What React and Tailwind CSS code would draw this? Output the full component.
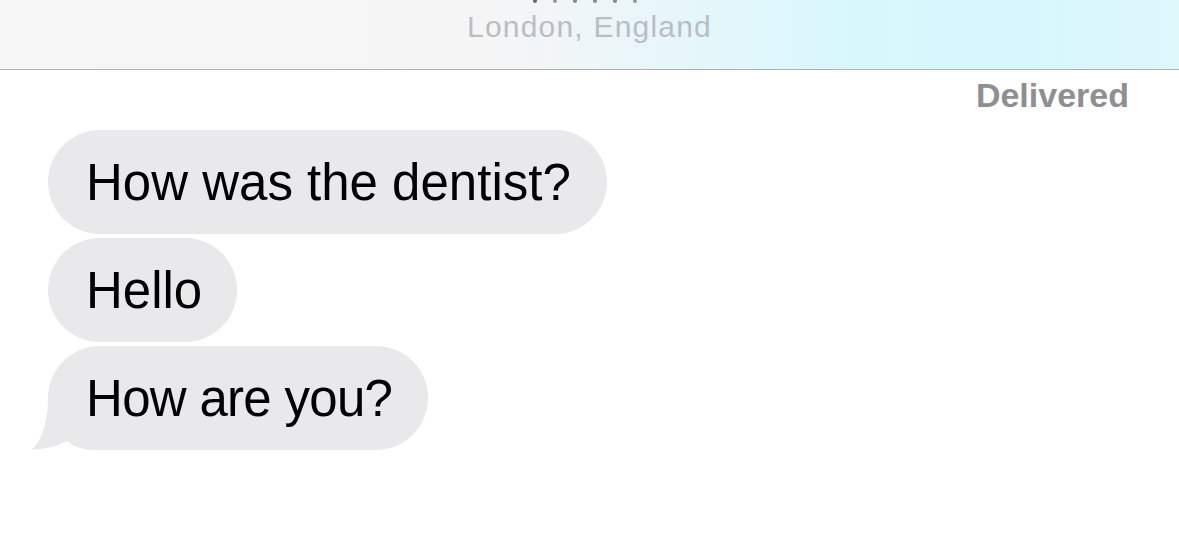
export default function App() {
  const font = { fontFamily: '"Liberation Sans", Arial, sans-serif' };
  return (
    <div className="w-[1179px] h-[535px] bg-white overflow-hidden" style={font}>
      <div className="h-[70px] border-b border-[#b3b3b3] flex flex-col items-center bg-[linear-gradient(90deg,#f6f6f6_0%,#f5f5f6_42%,#e6f6fa_58%,#d8f7fd_72%,#d6f7fe_86%,#ddf7fb_100%)]">
        <div className="flex gap-[16px] h-[3px] overflow-hidden ml-[-10px]">
          <span className="w-[4px] h-[3px] bg-[#6b6b6b] rounded-b-full"></span>
          <span className="w-[4px] h-[3px] bg-[#9a9a9a] rounded-b-full"></span>
          <span className="w-[4px] h-[3px] bg-[#8a8a8a] rounded-b-full"></span>
          <span className="w-[4px] h-[3px] bg-[#8a8a8a] rounded-b-full"></span>
          <span className="w-[4px] h-[3px] bg-[#8a8a8a] rounded-b-full"></span>
          <span className="w-[4px] h-[3px] bg-[#9a9a9a] rounded-b-full"></span>
        </div>
        <div className="mt-[9px] text-[30px] leading-[30px] tracking-[1.2px] text-[#b9bdc4]">
          London, England
        </div>
      </div>
      <div className="flex justify-end pr-[50px] mt-[9px]">
        <span className="text-[34px] leading-[33px] font-bold text-[#8e8e93]">Delivered</span>
      </div>
      <div className="flex flex-col items-start gap-[4px] pl-[48px] mt-[18px]">
        <div className="h-[104px] rounded-full bg-[#e9e9eb] flex items-center pl-[38px] pr-[36px] text-[51px] leading-[51px] text-black">
          How was the dentist?
        </div>
        <div className="h-[104px] rounded-full bg-[#e9e9eb] flex items-center pl-[38px] pr-[35px] text-[51px] leading-[51px] text-black">
          Hello
        </div>
        <div className="relative h-[104px] rounded-full bg-[#e9e9eb] flex items-center pl-[38px] pr-[36px] text-[51px] leading-[51px] tracking-[-0.7px] text-black">
          <svg className="absolute left-[-16px] bottom-0" width="72" height="52" viewBox="0 0 72 52">
            <path
              d="M16,0 C16,14 14,24 11,33 C8,42 4,48 0,51.5 C12,52 26,48 35,43 C42,49 52,52 62,52 L72,52 L72,0 Z"
              fill="#e9e9eb"
            />
          </svg>
          <span className="relative">How are you?</span>
        </div>
      </div>
    </div>
  );
}
